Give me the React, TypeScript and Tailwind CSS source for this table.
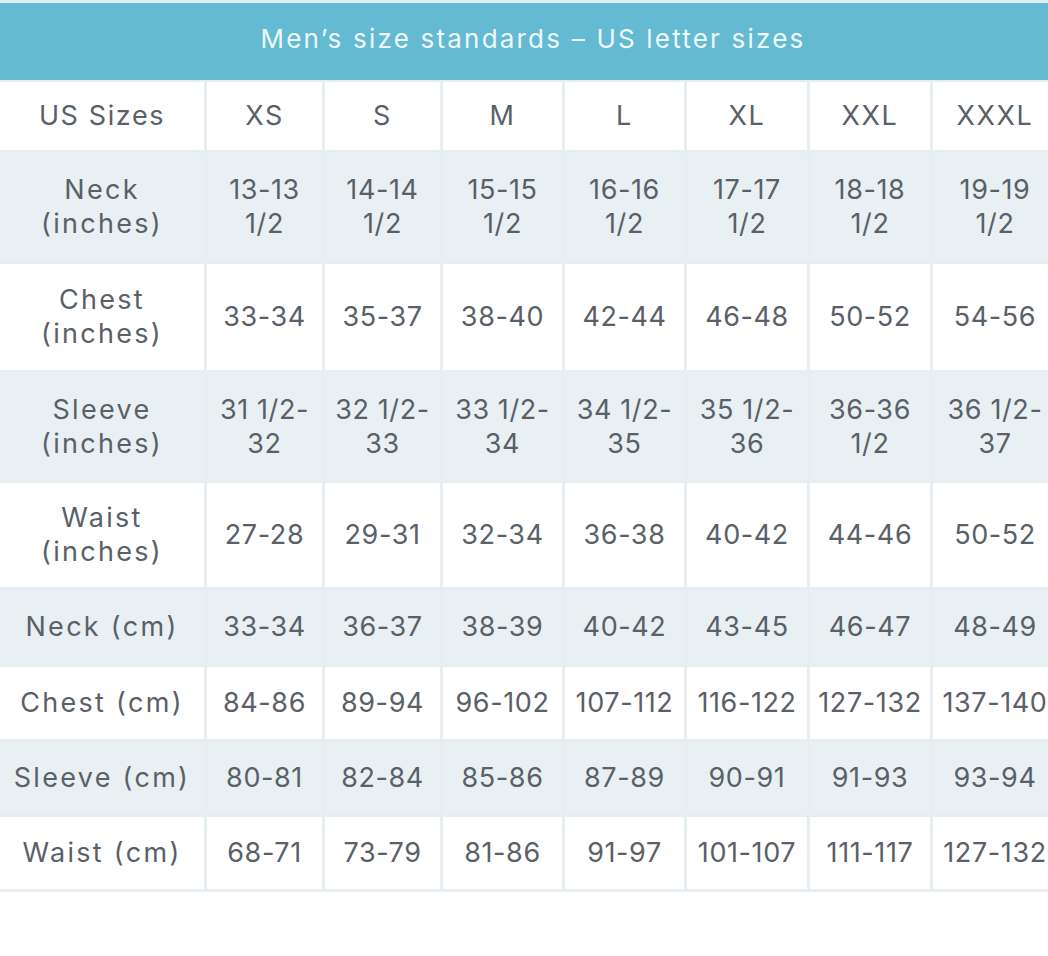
import React from 'react';

type Row = {
  label: string[];
  values: string[][];
  shaded: boolean;
  height: string;
};

const sizes = ['XS', 'S', 'M', 'L', 'XL', 'XXL', 'XXXL'];

const rows: Row[] = [
  {
    label: ['Neck', '(inches)'],
    values: [['13-13', '1/2'], ['14-14', '1/2'], ['15-15', '1/2'], ['16-16', '1/2'], ['17-17', '1/2'], ['18-18', '1/2'], ['19-19', '1/2']],
    shaded: true,
    height: 'h-[111px]',
  },
  {
    label: ['Chest', '(inches)'],
    values: [['33-34'], ['35-37'], ['38-40'], ['42-44'], ['46-48'], ['50-52'], ['54-56']],
    shaded: false,
    height: 'h-[109px]',
  },
  {
    label: ['Sleeve', '(inches)'],
    values: [['31 1/2-', '32'], ['32 1/2-', '33'], ['33 1/2-', '34'], ['34 1/2-', '35'], ['35 1/2-', '36'], ['36-36', '1/2'], ['36 1/2-', '37']],
    shaded: true,
    height: 'h-[110px]',
  },
  {
    label: ['Waist', '(inches)'],
    values: [['27-28'], ['29-31'], ['32-34'], ['36-38'], ['40-42'], ['44-46'], ['50-52']],
    shaded: false,
    height: 'h-[107px]',
  },
  {
    label: ['Neck (cm)'],
    values: [['33-34'], ['36-37'], ['38-39'], ['40-42'], ['43-45'], ['46-47'], ['48-49']],
    shaded: true,
    height: 'h-[77px]',
  },
  {
    label: ['Chest (cm)'],
    values: [['84-86'], ['89-94'], ['96-102'], ['107-112'], ['116-122'], ['127-132'], ['137-140']],
    shaded: false,
    height: 'h-[75px]',
  },
  {
    label: ['Sleeve (cm)'],
    values: [['80-81'], ['82-84'], ['85-86'], ['87-89'], ['90-91'], ['91-93'], ['93-94']],
    shaded: true,
    height: 'h-[75px]',
  },
  {
    label: ['Waist (cm)'],
    values: [['68-71'], ['73-79'], ['81-86'], ['91-97'], ['101-107'], ['111-117'], ['127-132']],
    shaded: false,
    height: 'h-[75px]',
  },
];

function Cell({
  lines,
  shaded,
  height,
  tracking,
}: {
  lines: string[];
  shaded: boolean;
  height: string;
  tracking: string;
}) {
  return (
    <div
      className={`${height} ${tracking} flex flex-col items-center justify-center border-r-[3px] border-b-[3px] border-[#e6eef1] text-center leading-[34px] whitespace-nowrap ${
        shaded ? 'bg-[#e8f0f3]' : 'bg-white'
      }`}
    >
      {lines.map((l) => (
        <span key={l}>{l}</span>
      ))}
    </div>
  );
}

export default function App() {
  return (
    <div className="w-[1048px] h-[956px] overflow-hidden bg-white font-['Inter','Liberation_Sans',sans-serif]">
      <div className="w-[1060px]">
        {/* Title bar */}
        <div className="border-t-[3px] border-[#dfeef3] bg-[#63bad2] h-[80px] flex items-center justify-center pl-[6px] pb-[6px]">
          <h1 className="text-[26px] text-[#eef8fb] tracking-[2.2px]">Men’s size standards – US letter sizes</h1>
        </div>

        {/* Size grid */}
        <div className="grid grid-cols-[207px_118px_118px_122px_122px_123px_123px_127px] text-[27px] text-[#5a6067] border-t-[2px] border-[#e6eef1]">
          <Cell lines={['US Sizes']} shaded={false} height="h-[71px]" tracking="tracking-[1.6px]" />
          {sizes.map((s) => (
            <Cell key={s} lines={[s]} shaded={false} height="h-[71px]" tracking="tracking-[1.6px]" />
          ))}

          {rows.map((row) => (
            <React.Fragment key={row.label.join(' ')}>
              <Cell lines={row.label} shaded={row.shaded} height={row.height} tracking="tracking-[2.3px]" />
              {row.values.map((v, i) => (
                <Cell key={i} lines={v} shaded={row.shaded} height={row.height} tracking="tracking-[0.6px]" />
              ))}
            </React.Fragment>
          ))}
        </div>
      </div>
    </div>
  );
}
